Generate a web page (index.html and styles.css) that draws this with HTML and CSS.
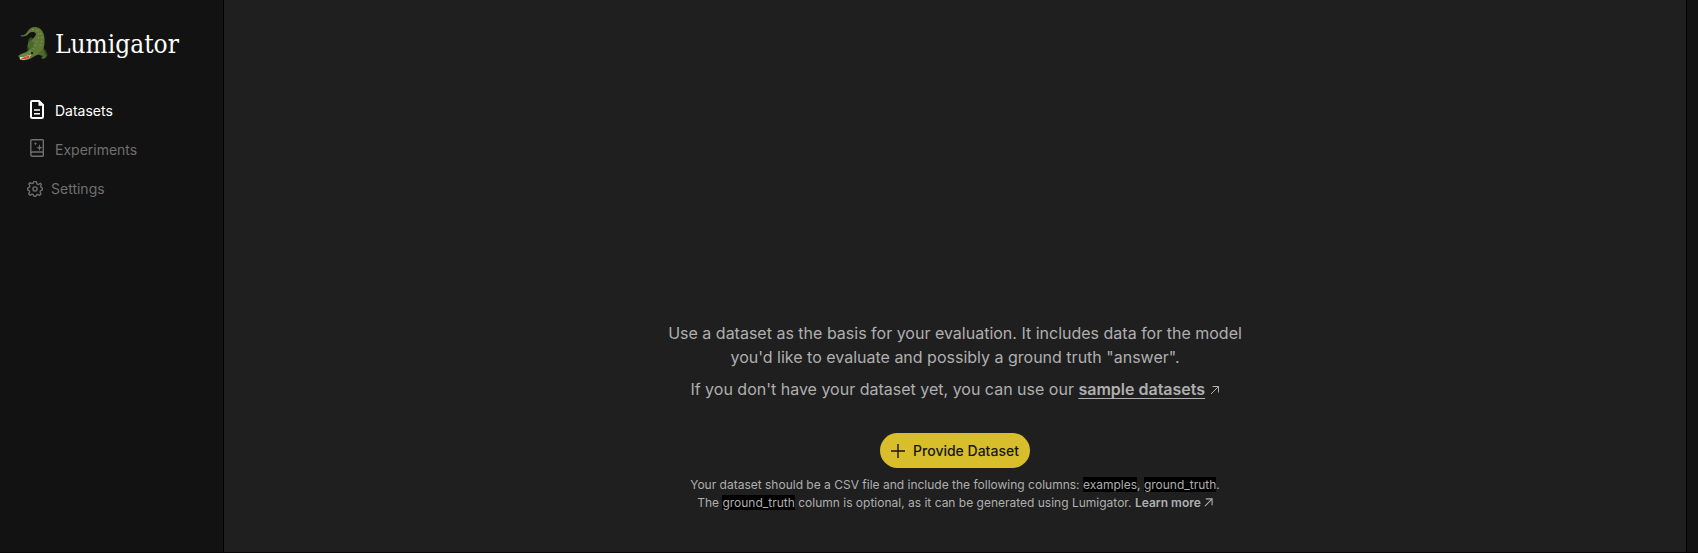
FILE: index.html
```html
<!DOCTYPE html>
<html lang="en">
<head>
<meta charset="utf-8">
<title>Lumigator</title>
<link rel="stylesheet" href="styles.css">
</head>
<body>
<div class="app">
  <aside class="sidebar">
    <div class="brand">
      <svg class="brand-mark" viewBox="0 0 30 36" width="30" height="36" aria-hidden="true">
        <path fill="#354a1c" d="M13 11C10 13 10 15 10 17L9 20L9.500 24L18 27L24 26L25 30L24 32L28 32L29.500 29L28 25L24 20Z"/>
        <path fill="#5d7836" d="M2.500 9.500C6 9.500 8 8 9.500 5.500C12 1 17 0 21 2C26 5 27 11 26.500 17C26 23 24 27 19 29L15 31C12 34 7 34.500 2 34L1 31L0 30L3 28L8 26L12 23L12.500 17C13 13 18 11 18 8C17 5.500 13 5.500 11 7.500C9 9.500 7 11 3 10.500Z"/>
        <path fill="#6c873f" d="M12 24L15 26L13 30L5 31L1 30L4 28L9 27Z"/>
        <path fill="#4c692b" d="M10 17L13 14L16 17L15 22L12 23L10 21ZM21 26L26 24L27 28L28 30L26 33L23 32L25 30L21 29Z"/>
        <path fill="none" stroke="#849c4c" stroke-width="1" stroke-dasharray="1.500 2.500" d="M14 3.500C20 3 22 8 20 13S17 20 15 23M20 4C25 8 25 15 21 22"/>
        <path fill="#e9dccb" d="M2 31L6 31L11 29L13 29L11 32L6 34L2 33Z"/>
        <path fill="#d8452f" d="M2.500 32.500L7 31L12 29L10.500 32L6 33.500Z"/>
        <circle cx="14" cy="27" r="1.200" fill="#1c2912"/>
      </svg>
      <span class="brand-name">Lumigator</span>
    </div>
    <nav class="menu">
      <a class="menu-item active" href="#datasets">
        <svg viewBox="0 0 14 22" width="14" height="22" fill="none" stroke="currentColor" stroke-width="2" aria-hidden="true">
          <path d="M2 1H9L13 5V16.500Q13 18 11.500 18H2.500Q1 18 1 16.500V2Q1 1 2 1Z"/>
          <path fill="currentColor" stroke="none" d="M8.500 1L13 5.800H8.500Z"/>
          <path stroke-width="1.400" d="M4 10H10M4 13.700H10"/>
        </svg>
        <span>Datasets</span>
      </a>
      <a class="menu-item" href="#experiments">
        <svg viewBox="0 0 14 22" width="14" height="22" fill="none" stroke="currentColor" stroke-width="1.400" aria-hidden="true">
          <path d="M13.300 .7H2Q.8 .7 .8 2V15.500Q.8 17.300 2.500 17.300H13.300M13.300 .7V13H2.500Q.8 13 .8 15M13.300 13V17.300"/>
          <path fill="currentColor" stroke="none" d="M9.500 5L10.300 7.900L13 8.700L10.300 9.500L9.500 12.200L8.700 9.500L6 8.700L8.700 7.900ZM5.500 2.800L6 4.200L7.300 4.700L6 5.200L5.500 6.600L5 5.200L3.700 4.700L5 4.200Z"/>
        </svg>
        <span>Experiments</span>
      </a>
      <a class="menu-item settings" href="#settings">
        <svg viewBox="0 0 24 24" width="16" height="16" fill="none" stroke="currentColor" stroke-width="2" stroke-linejoin="round" aria-hidden="true">
          <path d="M10 1H14L15 4.500L17 5.300L20 3.500L21.500 5L20.500 7.500L21 9.500L23 10.500V13.500L20.500 14.500L19.500 16.500L21 19.500L19 21.500L16 20L14.500 20.800L13.500 23H10.500L9.500 20.500L7.500 19.700L4.500 21.300L2.500 19.300L4 16.300L3.300 14.500L1 13.500V10.500L3.500 9.500L4.300 7.500L2.700 4.500L4.700 2.500L7.500 4L9.300 3.300Z"/>
          <circle cx="12" cy="12" r="3.200"/>
        </svg>
        <span>Settings</span>
      </a>
    </nav>
  </aside>
  <main class="content">
    <div class="intro">
      <p>Use a dataset as the basis for your evaluation. It includes data for the model you'd like to evaluate and possibly a ground truth "answer".</p>
      <p>If you don't have your dataset yet, you can use our <a class="sample-link" href="#samples">sample datasets</a>
        <svg class="arrow" viewBox="0 0 10 10" width="10" height="10" fill="none" stroke="currentColor" aria-hidden="true"><path d="M1 9L8.500 1.500M2.500 1.500H8.500V7.500"/></svg></p>
    </div>
    <button class="provide" type="button">
      <svg viewBox="0 0 14 14" width="14" height="14" stroke="currentColor" stroke-width="1.400" aria-hidden="true"><path d="M7 0V14M0 7H14"/></svg>
      <span>Provide Dataset</span>
    </button>
    <p class="hint">Your dataset should be a CSV file and include the following columns: <span class="code">examples</span>, <span class="code">ground_truth</span>.<br>
      The <span class="code">ground_truth</span> column is optional, as it can be generated using Lumigator. <a class="learn-link" href="#learn">Learn more
        <svg class="arrow" viewBox="0 0 10 10" width="9" height="9" fill="none" stroke="currentColor" stroke-width="1.200" aria-hidden="true"><path d="M1 9L9 1M2 1H9V8"/></svg></a></p>
  </main>
</div>
</body>
</html>
```

FILE: styles.css
```css
* {
  box-sizing: border-box;
}

body {
  margin: 0;
  background: #121212;
  color: #afafaf;
  font-family: Inter, sans-serif;
  font-size: 16px;
  line-height: 24px;
}

p {
  margin: 0;
}

a {
  color: inherit;
  text-decoration: none;
}

.app {
  display: flex;
  min-height: 100vh;
  padding-right: 11px;
  border-bottom: 1px solid #0b0708;
}

.sidebar {
  flex: 0 0 224px;
  padding: 26px 18px;
  border-right: 1px solid #000;
}

.brand {
  display: flex;
  align-items: center;
  gap: 7px;
}

.brand-name {
  color: #fff;
  font-family: "DejaVu Serif Condensed", "DejaVu Serif", serif;
  font-size: 26px;
  line-height: 36px;
}

.menu {
  display: flex;
  flex-direction: column;
  gap: 15px;
  margin-top: 37px;
  padding-left: 12px;
}

.menu-item {
  display: flex;
  align-items: center;
  gap: 11px;
  color: #6f6f6f;
  font-size: 14px;
}

.menu-item.active {
  color: #fff;
}

.menu-item.settings {
  gap: 8px;
  margin-left: -3px;
}

.content {
  flex: 1;
  display: flex;
  flex-direction: column;
  align-items: center;
  justify-content: flex-end;
  padding: 40px 24px;
  background: #1f1f1f;
  border-right: 1px solid #000;
  text-align: center;
}

.intro {
  display: flex;
  flex-direction: column;
  gap: 8px;
  max-width: 600px;
}

.sample-link {
  font-weight: 600;
  text-decoration: underline;
  text-underline-offset: 3px;
}

.provide {
  display: flex;
  align-items: center;
  gap: 8px;
  margin: 32px 0 8px;
  padding: 7px 11px;
  border: 0;
  border-radius: 18px;
  background: #d8be2b;
  color: #161616;
  font: 500 14px/21px Inter, sans-serif;
}

.hint {
  font-size: 12px;
  line-height: 18px;
}

.code {
  background: #000;
}

.learn-link {
  font-weight: 600;
}
```
